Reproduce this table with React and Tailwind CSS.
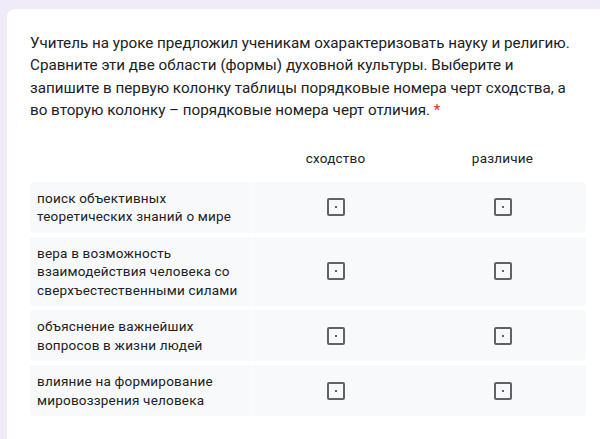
const rows = [
  ['поиск объективных', 'теоретических знаний о мире'],
  ['вера в возможность', 'взаимодействия человека со', 'сверхъестественными силами'],
  ['объяснение важнейших', 'вопросов в жизни людей'],
  ['влияние на формирование', 'мировоззрения человека'],
]

function Box() {
  return (
    <span className="w-[18px] h-[18px] rounded-[2px] border-2 border-[#5f6368] flex items-center justify-center">
      <span className="w-[2px] h-[2px] bg-[#5f6368]"></span>
    </span>
  )
}

export default function App() {
  return (
    <div className="w-[600px] h-[439px] overflow-hidden bg-[#f0ebf8] pt-[9px] pl-[7px] text-[#202124] font-['Roboto',sans-serif]">
      <div className="bg-white rounded-tl-[8px] w-[640px] h-[480px] pl-[23px] pt-[23px]">
        <p className="text-[15.2px] leading-[22.4px] w-[545px]">
          Учитель на уроке предложил ученикам охарактеризовать науку и религию. Сравните эти две области (формы) духовной культуры. Выберите и запишите в первую колонку таблицы порядковые номера черт сходства, а во вторую колонку – порядковые номера черт отличия. <span className="text-[#d93025]">*</span>
        </p>
        <div className="mt-[16px] w-[556px] text-[13.5px] tracking-[0.2px]">
          <div className="grid grid-cols-[222px_167px_167px] h-[40px] mb-[4px] items-center">
            <span></span>
            <span className="text-center">сходство</span>
            <span className="text-center">различие</span>
          </div>
          <div className="flex flex-col gap-[4px]">
            {rows.map((r, i) => (
              <div key={i} className="grid grid-cols-[222px_167px_167px] bg-[#f8f9fa] rounded-[4px]">
                <div className="pl-[7px] py-[7px] leading-[18.5px] border-r border-[#fdfdfe]">
                  {r.map((l, j) => <div key={j}>{l}</div>)}
                </div>
                <div className="flex items-center justify-center"><Box /></div>
                <div className="flex items-center justify-center"><Box /></div>
              </div>
            ))}
          </div>
        </div>
      </div>
    </div>
  )
}
